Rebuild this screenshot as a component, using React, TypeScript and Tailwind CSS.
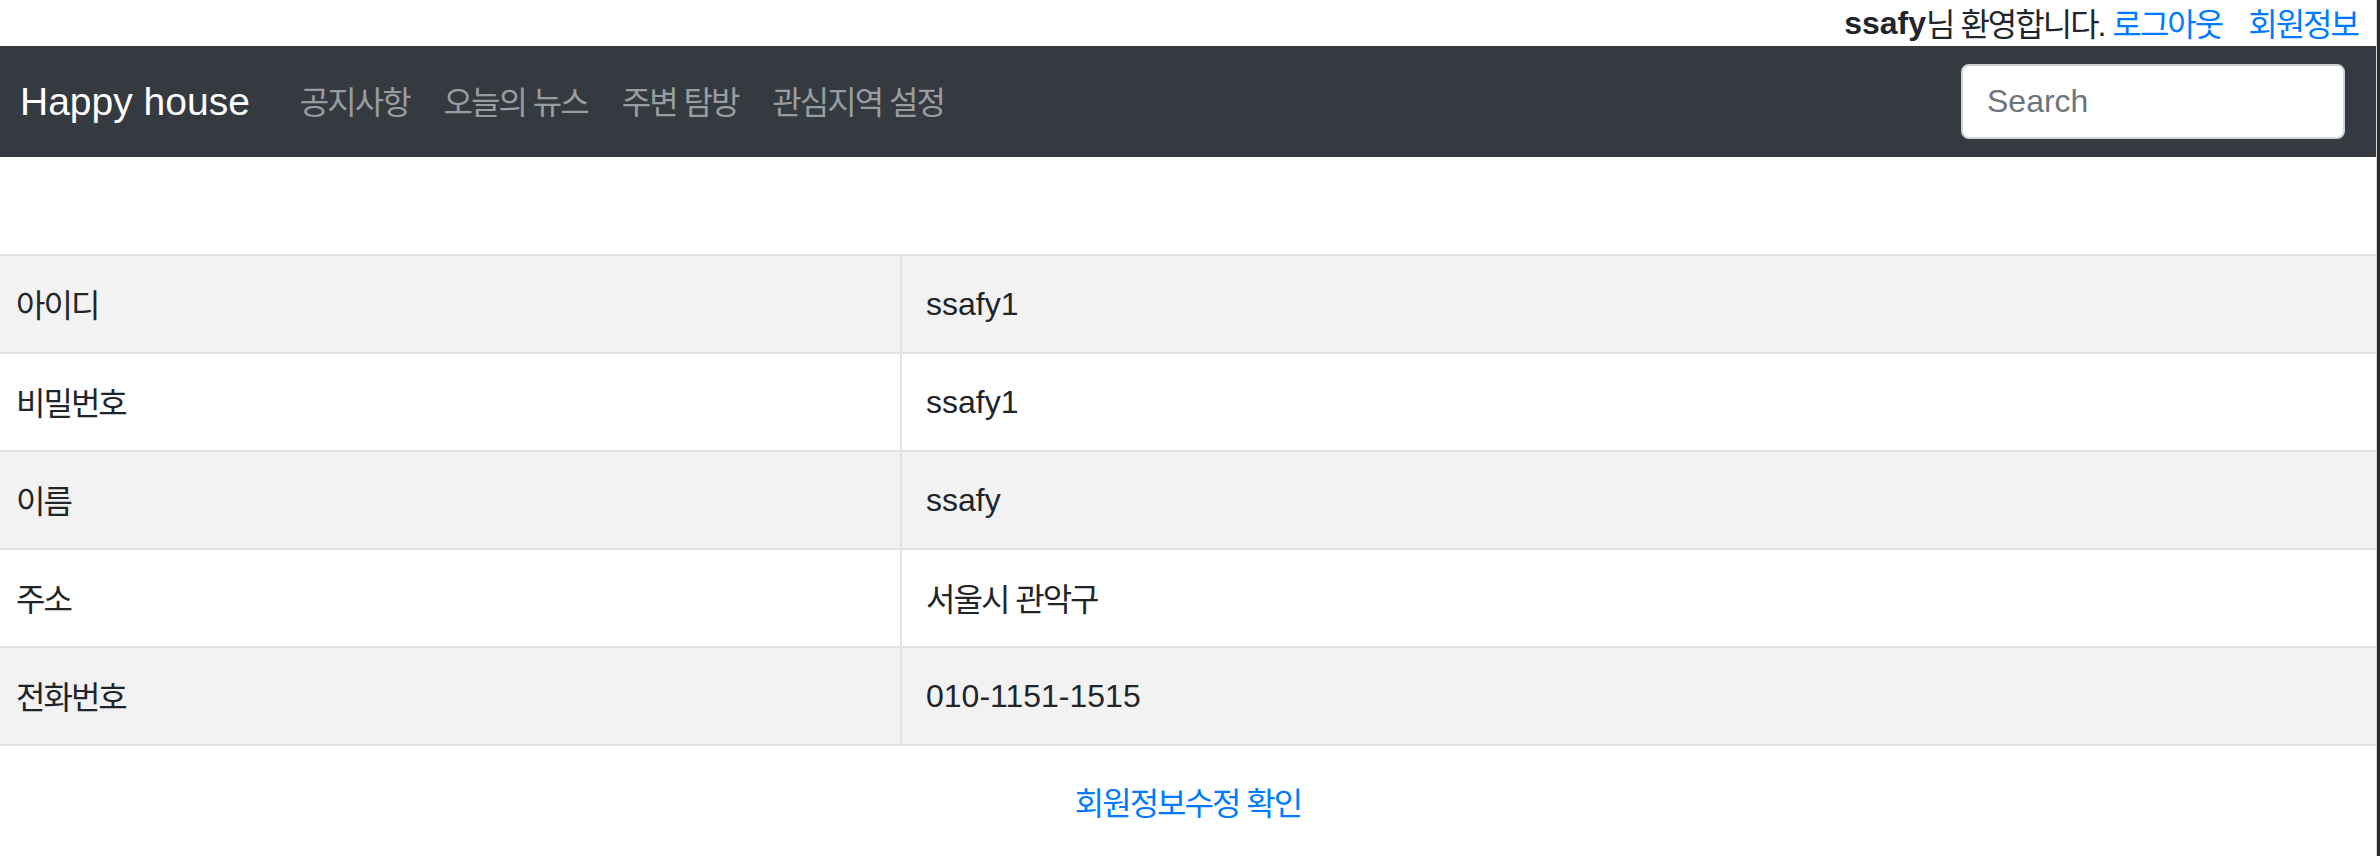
import React from "react"

const rows = [
  { label: "아이디", value: "ssafy1", ko: false },
  { label: "비밀번호", value: "ssafy1", ko: false },
  { label: "이름", value: "ssafy", ko: false },
  { label: "주소", value: "서울시 관악구", ko: true },
  { label: "전화번호", value: "010-1151-1515", ko: false },
]

const menu = ["공지사항", "오늘의 뉴스", "주변 탐방", "관심지역 설정"]

export default function App() {
  return (
    <div className="flex w-[2380px] min-h-[856px] bg-white font-['Liberation_Sans','Noto_Sans_CJK_KR',sans-serif] text-[#212529]">
      <div className="w-[2376px] flex flex-col">
        <div className="h-[46px] flex items-center justify-end pr-[18px] text-[32px] leading-none">
          <b className="font-bold">ssafy</b>
          <span className="tracking-[-2px] pt-[3px]">님 환영합니다.</span>
          <a href="#" className="ml-[8px] tracking-[-2px] pt-[3px] text-[#007bff]">
            로그아웃
          </a>
          <a href="#" className="ml-[26px] tracking-[-2px] pt-[3px] text-[#007bff]">
            회원정보
          </a>
        </div>

        <nav className="h-[111px] bg-[#343a40] flex items-center pl-[20px] pr-[31px]">
          <a href="#" className="text-[39px] leading-none text-white">
            Happy house
          </a>
          <ul className="flex items-center gap-[34px] ml-[50px] pt-[5px]">
            {menu.map((m) => (
              <li key={m}>
                <a href="#" className="text-[32px] tracking-[-2px] leading-none text-[#9a9da0]">
                  {m}
                </a>
              </li>
            ))}
          </ul>
          <input
            type="text"
            placeholder="Search"
            className="ml-auto w-[384px] h-[75px] rounded-[8px] border-2 border-[#ced4da] bg-white pl-[24px] text-[32px] text-[#495057] placeholder:text-[#6c757d] outline-none"
          />
        </nav>

        <div className="h-[97px]" />

        <div className="border-b-2 border-[#dee2e6]">
          {rows.map((r, i) => (
            <div
              key={r.label}
              className={`flex h-[98px] border-t-2 border-[#dee2e6] ${i % 2 === 0 ? "bg-[#f2f2f2]" : "bg-white"}`}
            >
              <div className="w-[900px] flex items-center pl-[16px] pt-[4px] text-[32px] tracking-[-2px]">
                {r.label}
              </div>
              <div
                className={`flex-1 flex items-center border-l-2 border-[#dee2e6] pl-[24px] text-[32px] ${r.ko ? "tracking-[-2px] pt-[4px]" : ""}`}
              >
                {r.value}
              </div>
            </div>
          ))}
        </div>

        <div className="h-[112px] flex items-center justify-center pt-[4px]">
          <a href="#" className="text-[32px] tracking-[-2px] text-[#007bff]">
            회원정보수정 확인
          </a>
        </div>
      </div>
      <div className="w-[1px] bg-[#d6d6d6]" />
      <div className="w-[3px] bg-[#2b2b2b]" />
    </div>
  )
}
